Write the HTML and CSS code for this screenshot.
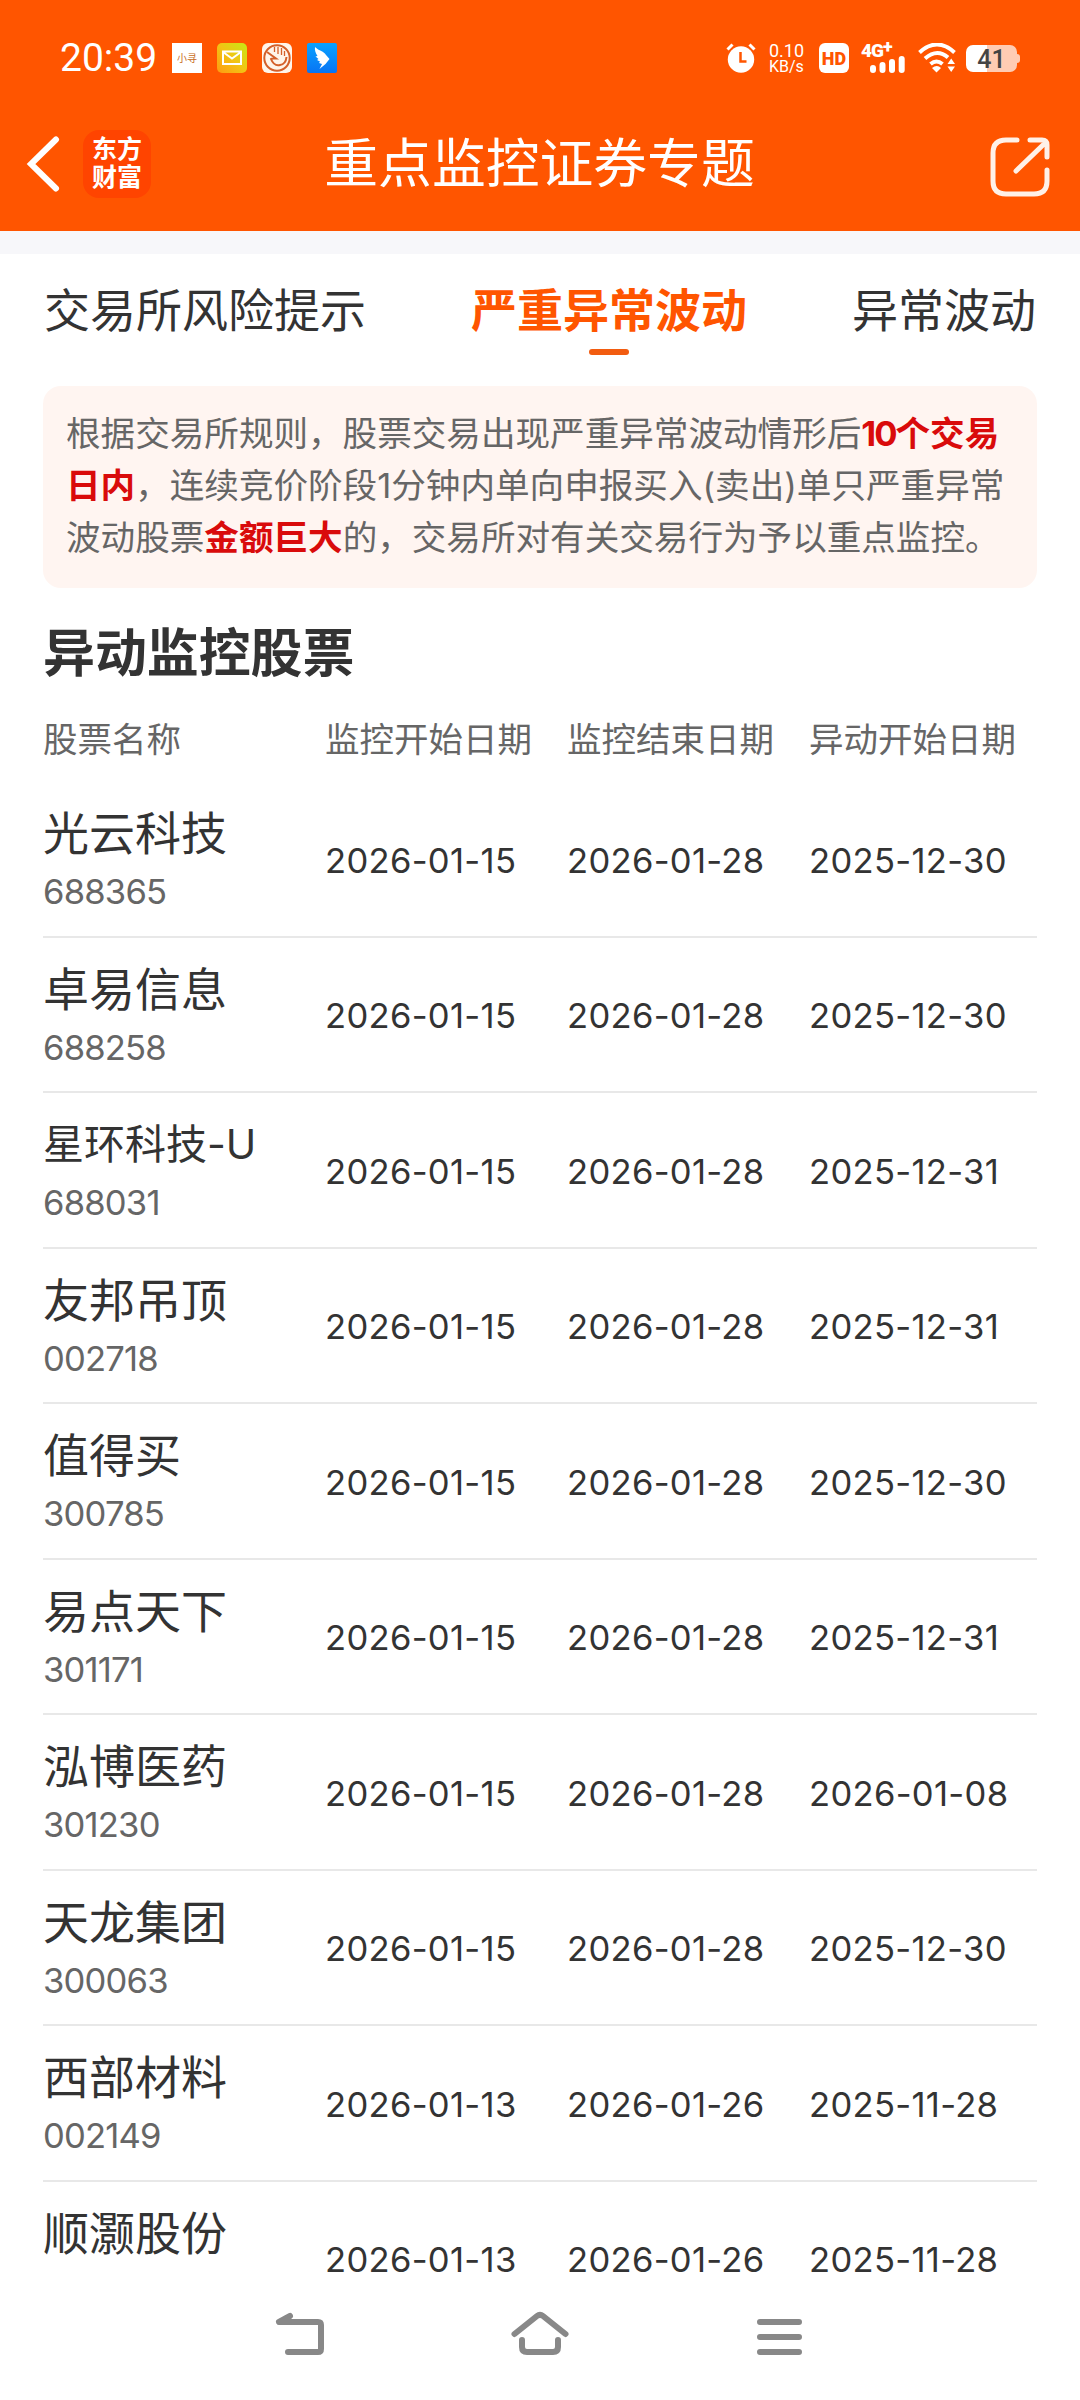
FILE: index.html
```html
<!DOCTYPE html>
<html lang="zh-CN">
<head>
    <meta charset="UTF-8">
    <meta name="viewport" content="width=device-width, initial-scale=1.0">
    <title>重点监控证券专题</title>
    <link rel="stylesheet" href="styles.css">
</head>
<body>

    <div class="header">
        <div class="status-bar">
            <span class="time">20:39</span>
            <div class="app-icons">
                <span class="app-icon xiaoxun">小寻</span>
                <svg class="app-icon" viewBox="0 0 30 30">
                    <defs>
                        <linearGradient id="mail" x1="0" y1="1" x2="1" y2="0">
                            <stop offset="0" stop-color="#ff9a12"/>
                            <stop offset="0.5" stop-color="#f2c414"/>
                            <stop offset="1" stop-color="#c6ea14"/>
                        </linearGradient>
                    </defs>
                    <rect width="30" height="30" rx="5" fill="url(#mail)"/>
                    <path d="M6 8.500h18v12.500H6zM6 9l9 6.500L24 9" fill="none" stroke="#fff" stroke-width="2"/>
                </svg>
                <svg class="app-icon" viewBox="0 0 30 30">
                    <rect width="30" height="30" rx="6" fill="#fff5ea"/>
                    <circle cx="15" cy="15" r="12.700" fill="none" stroke="#d4602a" stroke-width="2"/>
                    <path d="M5 9l9 6.500c-2 0-4-.5-5 .5 2 5 5 7 9 6 4-.5 6-3 6.500-8" fill="none" stroke="#d4602a" stroke-width="2"/>
                    <path d="M12.500 4v5M16 4v7M19.500 5v7M22.500 8v5" stroke="#d4602a" stroke-width="1.300"/>
                </svg>
                <svg class="app-icon" viewBox="0 0 30 30">
                    <defs>
                        <linearGradient id="wing" x1="0" y1="0" x2="0" y2="1">
                            <stop offset="0" stop-color="#0aa2ff"/>
                            <stop offset="1" stop-color="#0874f4"/>
                        </linearGradient>
                    </defs>
                    <rect width="30" height="30" rx="2" fill="url(#wing)"/>
                    <path d="M8 4c4 4 9 4 11 8l3.500 4-4 5-6 5 2.500-5-3-1 1-1.500-3-1.500 1.500-1-3-2.500 2-.5C8.500 10 7.500 7 8 4z" fill="#fff"/>
                </svg>
            </div>
            <div class="status-right">
                <svg class="alarm" viewBox="0 0 30 30">
                    <circle cx="15" cy="16.500" r="13.200" fill="#fff"/>
                    <path d="M1.500 6.500l5-5M28.500 6.500l-5-5" stroke="#fff" stroke-width="3"/>
                    <path d="M14.500 9v9.500h6" fill="none" stroke="#ff5500" stroke-width="2.500"/>
                </svg>
                <div class="speed">
                    <span>0.10</span>
                    <span class="unit">KB/s</span>
                </div>
                <span class="hd">HD</span>
                <div class="signal">
                    <span class="net">4G<sup>+</sup></span>
                    <svg class="bars" viewBox="0 0 35 17">
                        <path d="M3 12v2M12.500 9v5M22 6v8M31.700 3v11" stroke="#fff" stroke-width="6" stroke-linecap="round"/>
                    </svg>
                </div>
                <svg class="wifi" viewBox="0 0 38 30">
                    <path d="M1.500 9.500Q19-6.500 36.500 9.500M7 15.500q12-10.500 23 -1M12.500 21q6-5 12 0" fill="none" stroke="#fff" stroke-width="4"/>
                    <path d="M14 25q5-4 9 0l-4.500 4.500z" fill="#fff"/>
                    <path d="M29.500 21l3.700-5.500L37 21zM29.500 23.500l3.700 5.500L37 23.500z" fill="#fff"/>
                </svg>
                <div class="battery"><span class="level">41</span></div>
            </div>
        </div>

        <div class="nav-bar">
            <svg class="back" viewBox="0 0 34 56">
                <path d="M30 3.500L5 28l25 24.500" fill="none" stroke="#fff" stroke-width="6" stroke-linecap="round"/>
            </svg>
            <div class="logo">东方<br>财富</div>
            <h1>重点监控证券专题</h1>
            <svg class="share" viewBox="0 0 60 60">
                <path d="M27 3H16Q3 3 3 16v28Q3 57 16 57h28Q57 57 57 44V33M40 3h12q5 0 5 5v12M54 7L26 34" fill="none" stroke="#fff1e8" stroke-width="5" stroke-linecap="round"/>
            </svg>
        </div>
    </div>

    <div class="content">
        <div class="tabs">
            <div class="tab">交易所风险提示</div>
            <div class="tab active">严重异常波动</div>
            <div class="tab">异常波动</div>
        </div>

        <p class="notice">根据交易所规则，股票交易出现严重异常波动情形后<strong><span class="num">10</span>个交易<br>日内</strong>，连续竞价阶段1分钟内单向申报买入(卖出)单只严重异常<br>波动股票<strong>金额巨大</strong>的，交易所对有关交易行为予以重点监控。</p>

        <h2>异动监控股票</h2>

        <div class="table">
            <div class="table-head">
                <span>股票名称</span><span>监控开始日期</span><span>监控结束日期</span><span>异动开始日期</span>
            </div>
            <div class="row">
                <div class="stock">光云科技<small>688365</small></div>
                <span>2026-01-15</span><span>2026-01-28</span><span>2025-12-30</span>
            </div>
            <div class="row">
                <div class="stock">卓易信息<small>688258</small></div>
                <span>2026-01-15</span><span>2026-01-28</span><span>2025-12-30</span>
            </div>
            <div class="row">
                <div class="stock long">星环科技-U<small>688031</small></div>
                <span>2026-01-15</span><span>2026-01-28</span><span>2025-12-31</span>
            </div>
            <div class="row">
                <div class="stock">友邦吊顶<small>002718</small></div>
                <span>2026-01-15</span><span>2026-01-28</span><span>2025-12-31</span>
            </div>
            <div class="row">
                <div class="stock">值得买<small>300785</small></div>
                <span>2026-01-15</span><span>2026-01-28</span><span>2025-12-30</span>
            </div>
            <div class="row">
                <div class="stock">易点天下<small>301171</small></div>
                <span>2026-01-15</span><span>2026-01-28</span><span>2025-12-31</span>
            </div>
            <div class="row">
                <div class="stock">泓博医药<small>301230</small></div>
                <span>2026-01-15</span><span>2026-01-28</span><span>2026-01-08</span>
            </div>
            <div class="row">
                <div class="stock">天龙集团<small>300063</small></div>
                <span>2026-01-15</span><span>2026-01-28</span><span>2025-12-30</span>
            </div>
            <div class="row">
                <div class="stock">西部材料<small>002149</small></div>
                <span>2026-01-13</span><span>2026-01-26</span><span>2025-11-28</span>
            </div>
            <div class="row">
                <div class="stock">顺灏股份</div>
                <span>2026-01-13</span><span>2026-01-26</span><span>2025-11-28</span>
            </div>
        </div>
    </div>

    <div class="system-nav">
        <svg viewBox="0 0 60 50">
            <path d="M20 6L9 12h39q3 0 3 3v24q0 3-3 3H18" fill="none" stroke="#888" stroke-width="6" stroke-linecap="round" stroke-linejoin="round"/>
        </svg>
        <svg viewBox="0 0 60 50">
            <path d="M4.500 24L27 6q3-2.400 6 0l22.500 18M12 30v7q0 5 5 5h26q5 0 5-5v-7" fill="none" stroke="#888" stroke-width="6" stroke-linecap="round"/>
        </svg>
        <svg viewBox="0 0 60 50">
            <path d="M10 12h39M10 27h39M10 42h39" stroke="#888" stroke-width="6" stroke-linecap="round"/>
        </svg>
    </div>

</body>
</html>
```
FILE: styles.css
```css
* {
    box-sizing: border-box;
}
body {
    margin: 0;
    height: 2400px;
    overflow: hidden;
    display: flex;
    flex-direction: column;
    background-color: #fff;
    color: #333;
    font-family: Inter, "Noto Sans CJK SC", sans-serif;
}
h1, h2, p {
    margin: 0;
}
svg {
    display: block;
}

/* header */
.header {
    height: 231px;
    flex-shrink: 0;
    background-color: #ff5500;
    color: #fff;
}
.status-bar {
    display: flex;
    align-items: center;
    height: 116px;
    padding: 0 60px;
}
.time {
    width: 112px;
    font-family: Roboto, sans-serif;
    font-size: 39px;
    line-height: 40px;
}
.app-icons {
    display: flex;
    gap: 15px;
}
.app-icon {
    width: 30px;
    height: 30px;
}
.xiaoxun {
    background-color: #fff;
    color: #c86a20;
    font-size: 10px;
    line-height: 30px;
    text-align: center;
}
.status-right {
    display: flex;
    align-items: center;
    margin-left: auto;
}
.alarm {
    width: 30px;
    height: 30px;
    margin-right: 13px;
}
.speed {
    display: flex;
    flex-direction: column;
    width: 50px;
    font-family: Roboto, sans-serif;
    font-size: 18px;
    line-height: 17px;
}
.speed .unit {
    font-size: 16px;
    line-height: 16px;
}
.hd {
    width: 30px;
    height: 30px;
    margin-right: 12px;
    border-radius: 6px;
    background-color: #fff;
    color: #ff5500;
    font-family: Roboto, sans-serif;
    font-size: 18px;
    font-weight: 900;
    line-height: 31px;
    text-align: center;
}
.signal {
    width: 45px;
    margin-right: 12px;
}
.net {
    display: block;
    height: 13px;
    font-family: Roboto, sans-serif;
    font-size: 19px;
    font-weight: 900;
    line-height: 15px;
    letter-spacing: -1px;
    white-space: nowrap;
}
.net sup {
    font-size: 18px;
    line-height: 0;
    vertical-align: 4px;
}
.bars {
    width: 35px;
    height: 17px;
    margin-left: 9px;
}
.wifi {
    width: 38px;
    height: 30px;
    margin-right: 10px;
}
.battery {
    display: flex;
    align-items: center;
    width: 54px;
}
.battery .level {
    width: 51px;
    height: 27px;
    border-radius: 7px;
    background: linear-gradient(to right, #fff 41%, #ffccb3 41%);
    color: #444;
    font-family: Roboto, sans-serif;
    font-size: 25px;
    font-weight: 500;
    line-height: 29px;
    text-align: center;
}
.battery::after {
    content: "";
    width: 3px;
    height: 9px;
    border-radius: 0 3px 3px 0;
    background-color: #ffccb3;
}
.nav-bar {
    display: flex;
    align-items: center;
    height: 95px;
    padding: 0 30px 0 26px;
}
.back {
    width: 34px;
    height: 56px;
}
.logo {
    width: 68px;
    height: 68px;
    margin-left: 23px;
    padding-top: 5px;
    border-radius: 16px;
    background-color: #ff4400;
    font-size: 25px;
    font-weight: bold;
    line-height: 28px;
    text-align: center;
}
h1 {
    flex: 1;
    padding: 0 139px 0 77px;
    font-size: 53.8px;
    font-weight: 400;
    line-height: 70px;
    text-align: center;
    white-space: nowrap;
}
.share {
    width: 60px;
    height: 60px;
    margin-top: 7px;
}

/* content */
.content {
    flex: 1;
    min-height: 0;
    overflow: hidden;
    padding: 0 43px;
    border-top: 23px solid #f7f7fa;
}
.tabs {
    display: flex;
    justify-content: space-between;
    height: 132px;
    padding: 26px 1px 0;
    font-size: 46px;
    line-height: 60px;
}
.tab.active {
    display: flex;
    flex-direction: column;
    align-items: center;
    color: #ff5500;
    font-weight: bold;
}
.tab.active::after {
    content: "";
    width: 40px;
    height: 6px;
    margin-top: 9px;
    border-radius: 3px;
    background-color: #f25c10;
}
.notice {
    height: 202px;
    padding: 21px 0 0 23px;
    border-radius: 18px;
    background-color: #fff5f1;
    color: #666;
    font-size: 34.6px;
    line-height: 52px;
    white-space: nowrap;
}
.notice strong {
    color: #d90b0b;
}
.notice .num {
    letter-spacing: -2px;
}
h2 {
    margin-top: 31px;
    font-size: 51.9px;
    line-height: 70px;
}
.table-head, .row {
    display: grid;
    grid-template-columns: 282px 242px 242px 1fr;
    white-space: nowrap;
}
.table-head {
    height: 93px;
    padding-top: 26px;
    color: #666;
    font-size: 34.5px;
    line-height: 50px;
}
.row {
    align-items: center;
    height: 155.5px;
    border-bottom: 2px solid #e8e8e8;
    font-size: 34.6px;
    line-height: 30px;
    letter-spacing: 0.3px;
}
.stock {
    height: 155px;
    padding-top: 21px;
    font-size: 46px;
    line-height: 60px;
    letter-spacing: 0;
}
.stock.long {
    font-size: 41px;
}
.stock small {
    display: block;
    color: #666;
    font-size: 34.6px;
    line-height: 57px;
    letter-spacing: -0.8px;
}

/* bottom buttons */
.system-nav {
    display: flex;
    justify-content: center;
    gap: 180px;
    height: 114px;
    flex-shrink: 0;
    padding-top: 24px;
    background-color: #fff;
}
.system-nav svg {
    width: 60px;
    height: 50px;
}
```
